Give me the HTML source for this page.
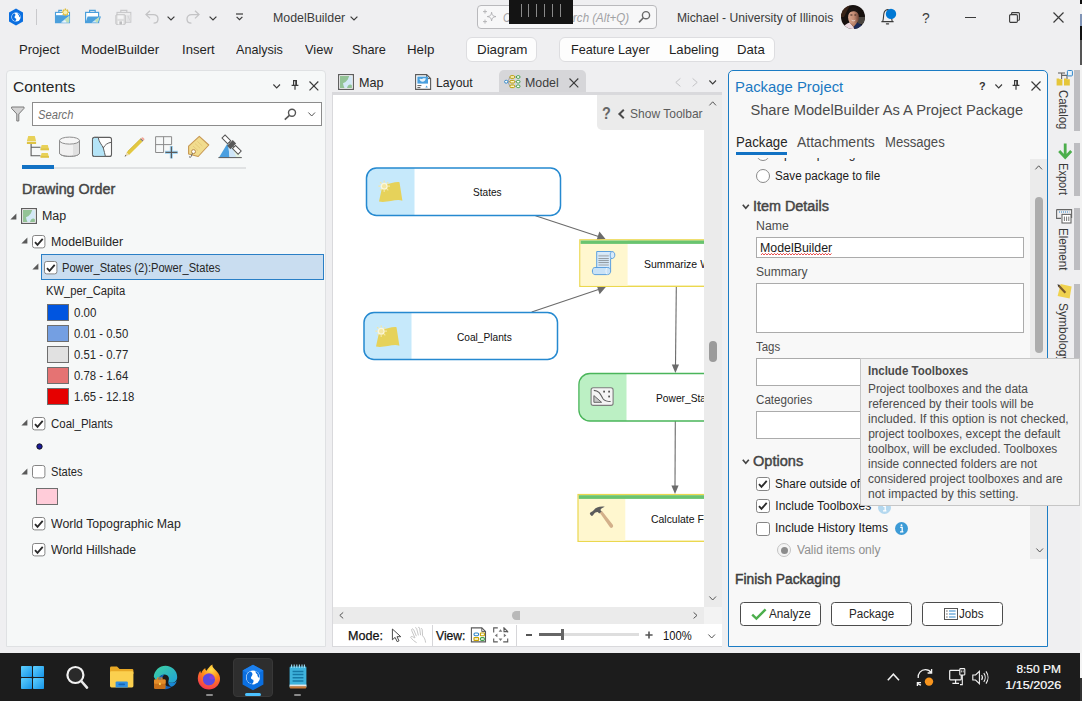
<!DOCTYPE html>
<html><head><meta charset="utf-8"><title>ArcGIS Pro - ModelBuilder</title>
<style>
html,body{margin:0;padding:0;}
body{width:1082px;height:701px;overflow:hidden;background:#efeff1;font-family:"Liberation Sans",sans-serif;}
#r{position:relative;width:1082px;height:701px;overflow:hidden;background:#efeff1;}
#r div,#r span.t,#r svg{position:absolute;box-sizing:border-box;}
#r span.t{white-space:nowrap;display:block;}
#r svg{overflow:visible;}
</style></head><body><div id="r">
<svg style="left:8px;top:8px;" width="16" height="18" viewBox="0 0 16 18"><path d="M8 0.6 L15 4.4 V13.6 L8 17.4 L1 13.6 V4.4 Z" fill="#0b6fe0"/>
<circle cx="8" cy="9" r="4.6" fill="#fff"/>
<path d="M6.2 5.2 C7.6 6 7.9 7 7 8 C6 9 6.6 10.4 8 10.6 C8.6 11.6 8 12.6 7.2 13.2 C4.8 12.6 3.6 10.6 3.9 8.4 C4.1 7 5 5.8 6.2 5.2 Z M9.6 5 C11.4 5.8 12.4 7.4 12.2 9.4 C11.4 9 10.8 8.2 10.9 7.2 C10.2 6.6 9.6 5.9 9.6 5 Z" fill="#0b6fe0"/></svg>
<div style="left:35.5px;top:9px;width:1.5px;height:16px;background:#c9c9cc;"></div>
<svg style="left:50px;top:4px;" width="90" height="26" viewBox="50 4 90 26">
<path d="M58.8 12 V10.4 H62" fill="none" stroke="#4a9fdc" stroke-width="1.1"/>
<rect x="55.5" y="12.4" width="14" height="10.2" fill="#fff" stroke="#4a9fdc" stroke-width="1.1"/>
<rect x="55" y="15.2" width="15" height="7.9" fill="#4a9fdc"/>
<path d="M60.6 22.4 L69.2 16 V22.4 Z" fill="#cfe8f6"/><path d="M64.6 19.4 L69.2 16 V22.4 H67 Z" fill="#bfe0b6"/><path d="M62 22.4 L65 20.2 L66.6 22.4 Z" fill="#eaf5fb"/>
<g stroke="#d9b93a" stroke-width="1.3"><path d="M65.4 8.6 V16 M61.7 12.3 H69.1 M62.8 9.7 L68 14.9 M68 9.7 L62.8 14.9"/></g>
<circle cx="65.4" cy="12.3" r="2.7" fill="#e0c244"/><circle cx="65.4" cy="12.3" r="2" fill="#f6efb6"/>
<path d="M89.6 12 V10.4 H95.2 V12" fill="none" stroke="#4a9fdc" stroke-width="1.2"/>
<rect x="85.6" y="12.4" width="13" height="10.2" fill="#fff" stroke="#4a9fdc" stroke-width="1.2"/>
<path d="M85.4 23.1 L87.6 16.4 H101 L98.6 23.1 Z" fill="#4a9fdc"/>
<path d="M91.6 22.4 L99.4 17 L97.8 22.4 Z" fill="#cfe8f6"/><path d="M95 20 L99.4 17 L97.8 22.4 H96.4 Z" fill="#bfe0b6"/>
<path d="M120.8 12 V10.4 H126.8 V12" fill="none" stroke="#c8c8ca" stroke-width="1.2"/>
<rect x="117" y="12.4" width="13.8" height="9.8" fill="#ededee" stroke="#c8c8ca" stroke-width="1.1"/>
<path d="M126.4 15 H130.4 V21.6 H126.4 Z" fill="#e2e2e4"/><path d="M128 16 C128.6 18 129.6 19.6 130.2 20.6" fill="none" stroke="#d0d0d2" stroke-width="0.9"/>
<rect x="115.9" y="14.8" width="9.4" height="9.6" rx="0.8" fill="#dededf" stroke="#c2c2c4" stroke-width="1"/>
<rect x="117.6" y="15.4" width="6" height="3.4" fill="#f4f4f5"/>
<rect x="117.8" y="21" width="5.6" height="3.4" fill="#f4f4f5"/><rect x="119.4" y="21.4" width="2.6" height="3" fill="#bdbdbf"/>
</svg>
<svg style="left:145px;top:10px;" width="14" height="14" viewBox="0 0 14 14"><path d="M5 0.8 L1 4.6 L5 8.4 M1 4.6 H8.2 C11.4 4.6 13 6.6 13 9 C13 11.4 11.2 13.2 8.6 13.2" fill="none" stroke="#c3c3c5" stroke-width="1.3"/></svg>
<svg style="left:167px;top:16px;" width="8" height="5" viewBox="0 0 8 5"><path d="M0.6 0.6 L4 4 L7.4 0.6" fill="none" stroke="#3b3b3b" stroke-width="1.2"/></svg>
<svg style="left:186px;top:10px;" width="14" height="14" viewBox="0 0 14 14"><path d="M9 0.8 L13 4.6 L9 8.4 M13 4.6 H5.8 C2.6 4.6 1 6.6 1 9 C1 11.4 2.8 13.2 5.4 13.2" fill="none" stroke="#c3c3c5" stroke-width="1.3"/></svg>
<svg style="left:209px;top:16px;" width="8" height="5" viewBox="0 0 8 5"><path d="M0.6 0.6 L4 4 L7.4 0.6" fill="none" stroke="#3b3b3b" stroke-width="1.2"/></svg>
<svg style="left:235px;top:13px;" width="9" height="8" viewBox="0 0 9 8"><path d="M1 1 H8" stroke="#3b3b3b" stroke-width="1.2"/><path d="M1.6 3.8 L4.5 6.7 L7.4 3.8" fill="none" stroke="#3b3b3b" stroke-width="1.2"/></svg>
<span class="t" style="top:8.50px;font-size:13px;line-height:18px;color:#3b3b3b;left:273.30px;transform-origin:0 0;transform:scaleX(0.9516);">ModelBuilder</span>
<svg style="left:350px;top:16px;" width="8" height="5" viewBox="0 0 8 5"><path d="M0.6 0.6 L4 4 L7.4 0.6" fill="none" stroke="#3b3b3b" stroke-width="1.2"/></svg>
<div style="left:477px;top:5px;width:180px;height:24px;background:#f7f7f8;border:1px solid #b9b9bc;border-radius:4px;"></div>
<svg style="left:482px;top:9px;" width="16" height="16" viewBox="0 0 16 16"><path d="M9.6 3.2 C10 6.4 10.8 7.2 14 7.6 C10.8 8 10 8.8 9.6 12 C9.2 8.8 8.4 8 5.2 7.6 C8.4 7.2 9.2 6.4 9.6 3.2 Z" fill="none" stroke="#b0b0b3" stroke-width="0.9"/>
<path d="M3 0.6 V4.6 M1 2.6 H5 M3 10.6 V14.6 M1 12.6 H5" stroke="#b0b0b3" stroke-width="0.9"/></svg>
<span class="t" style="top:9.00px;font-size:12.5px;line-height:18px;color:#a2a2a5;font-style:italic;left:502.90px;transform-origin:0 0;transform:scaleX(0.8492);">Command Sea</span>
<span class="t" style="top:9.00px;font-size:12.5px;line-height:18px;color:#a2a2a5;font-style:italic;left:572.70px;transform-origin:0 0;transform:scaleX(0.9248);">rch (Alt+Q)</span>
<svg style="left:638px;top:10px;" width="13" height="14" viewBox="0 0 13 14"><circle cx="8" cy="5.2" r="3.6" fill="none" stroke="#6a6a6a" stroke-width="1.4"/><path d="M5.4 7.8 L1 12.4" stroke="#6a6a6a" stroke-width="1.6"/></svg>
<div style="left:509px;top:0px;width:64px;height:23.5px;background:#141414;"></div>
<div style="left:520.5px;top:4px;width:1.2px;height:12.5px;background:#8a8a8a;"></div>
<div style="left:528.3px;top:4px;width:1.2px;height:12.5px;background:#8a8a8a;"></div>
<div style="left:536.2px;top:4px;width:1.2px;height:12.5px;background:#8a8a8a;"></div>
<div style="left:544.0px;top:4px;width:1.2px;height:12.5px;background:#8a8a8a;"></div>
<div style="left:552.0px;top:4px;width:1.2px;height:12.5px;background:#8a8a8a;"></div>
<div style="left:560.0px;top:4px;width:1.2px;height:12.5px;background:#8a8a8a;"></div>
<span class="t" style="top:8.50px;font-size:13px;line-height:18px;color:#3b3b3b;left:677.00px;transform-origin:0 0;transform:scaleX(0.9320);">Michael - University of Illinois</span>
<svg style="left:841px;top:5px;" width="24" height="24" viewBox="0 0 24 24"><defs><clipPath id="av"><circle cx="12" cy="11.9" r="12"/></clipPath>
<linearGradient id="sk" x1="0" y1="0" x2="1" y2="0"><stop offset="0" stop-color="#d9a78f"/><stop offset="0.55" stop-color="#c48c74"/><stop offset="1" stop-color="#6e4436"/></linearGradient></defs>
<g clip-path="url(#av)"><rect width="24" height="24" fill="#17110f"/>
<path d="M0 0 H9 L3 12 H0 Z" fill="#3a2418"/>
<path d="M16 12 H24 V19 H17 Z" fill="#4a4540"/>
<ellipse cx="12.5" cy="12.4" rx="5.4" ry="7.4" fill="url(#sk)"/>
<path d="M7.2 9.4 C7.2 4.8 9.6 2.6 12.6 2.6 C15.8 2.6 17.6 5 17.5 9 C16.4 6.8 14.4 6 12.6 6.2 C10.4 6.2 8.4 7.2 7.2 9.4 Z" fill="#1c1614"/>
<path d="M9.4 10 H11.4 M13.4 10 H15.2" stroke="#2a1c18" stroke-width="0.9"/>
<path d="M10.6 15.2 C11.8 16 13.2 16 14.2 15.2" fill="none" stroke="#f2e4de" stroke-width="0.9"/>
<path d="M1 24 C2.4 20.4 5.4 18.6 8.6 17.4 L12.6 22 L13.4 24 Z" fill="#ecd9e0"/>
<path d="M13.4 24 L12.6 22 L16 17.6 C19 18.6 21.6 20.4 23 24 Z" fill="#1d2b58"/>
<path d="M8.6 17.4 L12.6 22 L16 17.6 C14 19 10.8 19 8.6 17.4 Z" fill="#b88068"/></g></svg>
<svg style="left:880px;top:8px;" width="15" height="17" viewBox="0 0 15 17"><path d="M1.4 13.6 H13.6 M2.8 13.2 C3.6 11 3.4 8.4 3.8 6 C4.2 3.6 5.6 1.8 7.6 1.6 C9.4 1.8 10.8 3.4 11.2 5.6 C11.6 8.2 11.4 11 12.2 13.2" fill="none" stroke="#3b3b3b" stroke-width="1.1"/>
<path d="M6.4 15.8 H8.6" stroke="#3b3b3b" stroke-width="1.2" stroke-linecap="round"/>
<circle cx="11" cy="5.9" r="5.2" fill="#0078d4"/></svg>
<span class="t" style="top:8.00px;font-size:14px;line-height:20px;color:#3b3b3b;left:922.30px;transform-origin:0 0;transform:scaleX(0.9890);">?</span>
<div style="left:965px;top:17px;width:10.5px;height:1.2px;background:#3b3b3b;"></div>
<svg style="left:1009px;top:12px;" width="11" height="11" viewBox="0 0 11 11"><path d="M2.6 2.6 V1.4 Q2.6 0.6 3.4 0.6 H9.4 Q10.4 0.6 10.4 1.6 V7.4 Q10.4 8.2 9.6 8.2 H8.4" fill="none" stroke="#3b3b3b" stroke-width="1.1"/><rect x="0.6" y="2.6" width="7.8" height="7.8" rx="1.2" fill="none" stroke="#3b3b3b" stroke-width="1.1"/></svg>
<svg style="left:1052.5px;top:12px;" width="11" height="11" viewBox="0 0 11 11"><path d="M0.5 0.5 L10.5 10.5 M10.5 0.5 L0.5 10.5" stroke="#3b3b3b" stroke-width="1.2"/></svg>
<span class="t" style="top:40.00px;font-size:13.5px;line-height:19px;color:#1f1f1f;left:18.80px;transform-origin:0 0;transform:scaleX(0.9687);">Project</span>
<span class="t" style="top:40.00px;font-size:13.5px;line-height:19px;color:#1f1f1f;left:80.80px;transform-origin:0 0;transform:scaleX(0.9925);">ModelBuilder</span>
<span class="t" style="top:40.00px;font-size:13.5px;line-height:19px;color:#1f1f1f;left:181.80px;transform-origin:0 0;transform:scaleX(0.9686);">Insert</span>
<span class="t" style="top:40.00px;font-size:13.5px;line-height:19px;color:#1f1f1f;left:236.30px;transform-origin:0 0;transform:scaleX(0.9330);">Analysis</span>
<span class="t" style="top:40.00px;font-size:13.5px;line-height:19px;color:#1f1f1f;left:304.80px;transform-origin:0 0;transform:scaleX(0.9546);">View</span>
<span class="t" style="top:40.00px;font-size:13.5px;line-height:19px;color:#1f1f1f;left:352.30px;transform-origin:0 0;transform:scaleX(0.9411);">Share</span>
<span class="t" style="top:40.00px;font-size:13.5px;line-height:19px;color:#1f1f1f;left:406.80px;transform-origin:0 0;transform:scaleX(0.9869);">Help</span>
<div style="left:466px;top:36.5px;width:70.5px;height:25.5px;background:#fdfdfd;border:1px solid #dddde0;border-radius:6px;"></div>
<span class="t" style="top:40.00px;font-size:13.5px;line-height:19px;color:#1f1f1f;left:477.00px;transform-origin:0 0;transform:scaleX(0.9900);">Diagram</span>
<div style="left:559px;top:36.5px;width:215.5px;height:25.5px;background:#fdfdfd;border:1px solid #dddde0;border-radius:6px;"></div>
<span class="t" style="top:40.00px;font-size:13.5px;line-height:19px;color:#1f1f1f;left:570.90px;transform-origin:0 0;transform:scaleX(0.9353);">Feature Layer</span>
<span class="t" style="top:40.00px;font-size:13.5px;line-height:19px;color:#1f1f1f;left:669.30px;transform-origin:0 0;transform:scaleX(0.9776);">Labeling</span>
<span class="t" style="top:40.00px;font-size:13.5px;line-height:19px;color:#1f1f1f;left:737.30px;transform-origin:0 0;transform:scaleX(0.9749);">Data</span>
<div style="left:6px;top:70px;width:320px;height:577px;background:#f6f8f8;border:1px solid #dfe1e3;border-radius:4px 4px 0 0;"></div>
<span class="t" style="top:76.00px;font-size:15px;line-height:21px;color:#262626;left:12.60px;transform-origin:0 0;transform:scaleX(1.0361);">Contents</span>
<svg style="left:273px;top:83.5px;" width="8" height="5" viewBox="0 0 8 5"><path d="M0.4 0.5 L3.7 4 L7 0.5" fill="none" stroke="#3b3b3b" stroke-width="1.1"/></svg>
<svg style="left:291px;top:80px;" width="8" height="10" viewBox="0 0 8 10"><path d="M2 0.6 H6 M2.6 0.6 V5.2 M5.4 0.6 V5.2 M0.6 5.4 H7.4 M4 5.4 V9.8" fill="none" stroke="#3b3b3b" stroke-width="1.2"/><rect x="4.3" y="0.6" width="1.4" height="4.8" fill="#3b3b3b"/></svg>
<svg style="left:309px;top:81px;" width="10" height="10" viewBox="0 0 10 10"><path d="M0.5 0.5 L9.3 9.3 M9.3 0.5 L0.5 9.3" stroke="#3b3b3b" stroke-width="1.2"/></svg>
<svg style="left:11px;top:106px;" width="14" height="16" viewBox="0 0 14 16"><path d="M0.6 1 H13 V2.4 L7.8 8 V15 H5.8 V8 L0.6 2.4 Z" fill="#d4d4d4" stroke="#7a7a7a" stroke-width="1"/></svg>
<div style="left:32px;top:102px;width:290px;height:24px;background:#fff;border:1px solid #8c8c8c;"></div>
<span class="t" style="top:106.00px;font-size:12.5px;line-height:18px;color:#6e6e6e;font-style:italic;left:37.60px;transform-origin:0 0;transform:scaleX(0.8939);">Search</span>
<svg style="left:284px;top:108px;" width="13" height="13" viewBox="0 0 13 13"><circle cx="8" cy="4.8" r="3.5" fill="none" stroke="#555" stroke-width="1.4"/><path d="M5.4 7.4 L0.8 11.6" stroke="#555" stroke-width="1.6"/></svg>
<svg style="left:308px;top:112px;" width="8" height="5" viewBox="0 0 8 5"><path d="M0.4 0.5 L3.7 4 L7 0.5" fill="none" stroke="#555" stroke-width="1"/></svg>
<svg style="left:20px;top:130px;" width="230" height="42" viewBox="20 130 230 42">
<path d="M31.1 144 V155.7 H40.5 M31.1 147.3 H40.5" fill="none" stroke="#5a5a5a" stroke-width="1.1"/>
<path d="M28.2 136.1 H34.8 L36.1 141 H26.9 Z" fill="#e8d158"/><rect x="26.9" y="141.7" width="9.2" height="2.3" fill="#dec344"/>
<path d="M41.6 145 H47.8 L49 149.6 H40.5 Z" fill="#e8d158"/><rect x="40.5" y="148.4" width="8.5" height="1.9" fill="#dec344"/>
<path d="M41.6 153 H47.8 L49 157 H40.5 Z" fill="#e8d158"/><rect x="40.5" y="156" width="8.5" height="1.8" fill="#dec344"/>
<!-- cylinder -->
<path d="M59.5 140.6 V153 C59.5 155 64 156.4 69.5 156.4 C75 156.4 79.5 155 79.5 153 V140.6" fill="#f1f1f1" stroke="#8e8e8e" stroke-width="1"/>
<path d="M73 143.6 C76.6 143.2 79 142.2 79.4 141 V153 C79 154.6 76.6 155.6 73 156.2 Z" fill="#e0e0e0"/>
<ellipse cx="69.5" cy="140.6" rx="10" ry="3.5" fill="#f6f6f6" stroke="#8e8e8e" stroke-width="1"/>
<path d="M59.5 140.6 V153 C59.5 155 64 156.4 69.5 156.4 C75 156.4 79.5 155 79.5 153 V140.6" fill="none" stroke="#8e8e8e" stroke-width="1"/>
<!-- polygon -->
<rect x="92.5" y="137.4" width="19" height="19" rx="2" fill="#fdfdfd" stroke="#5e5e5e" stroke-width="1.1"/>
<path d="M92.5 139.4 Q92.5 137.4 94.5 137.4 H98.2 C98.8 142 101.8 144.6 103.3 148 C104.4 151 104.6 154 105.4 156.4 H94.5 Q92.5 156.4 92.5 154.4 Z" fill="#b4e4f7" stroke="#5e5e5e" stroke-width="1"/>
<path d="M103.3 148 C104.6 145 107.6 142.8 111.5 142.2" fill="none" stroke="#5e5e5e" stroke-width="1"/>
<!-- pencil -->
<path d="M126.6 152.6 L140.2 139.2 L142.6 141.6 L129 155.1 Z" fill="#e3c840"/>
<path d="M127.6 151.6 L141 138.4" stroke="#cdb02e" stroke-width="0.8"/>
<path d="M140.2 139.2 L141 138.4 L143.4 140.8 L142.6 141.6 Z" fill="#6a6a6a"/>
<path d="M141 138.4 L141.8 137.6 Q142.6 137 143.4 137.7 L144.1 138.4 Q144.8 139.2 144.2 140 L143.4 140.8 Z" fill="#f0a79a"/>
<path d="M126.6 152.6 L124.6 156.6 L129 155.1 Z" fill="#ead8ac"/><path d="M124.6 156.6 L125.4 155 L126.4 156 Z" fill="#444"/>
<!-- grid plus -->
<path d="M155.6 136.7 H171.6 V144.6 M155.6 136.7 V152.5 H163.6 M163.6 136.7 V152.5 M155.6 144.6 H171.6" fill="none" stroke="#8a8a8a" stroke-width="1"/>
<path d="M171.4 146 V158.6 M165 152.4 H177.8" stroke="#a6d8f6" stroke-width="3.2"/>
<path d="M171.4 146.4 V158.2 M165.4 152.4 H177.4" stroke="#5a5a5a" stroke-width="1.2"/>
<!-- tag -->
<path d="M199.3 136.4 L208.8 145 L198.2 156.5 L188.6 154 V146.2 Z" fill="#f1dc8e" stroke="#c79852" stroke-width="1.1" stroke-linejoin="round"/>
<path d="M197.4 141.4 L202.4 146 M195 143.6 L200 148.2 M193 146 L198 150.6" stroke="#e4c878" stroke-width="0.9"/>
<circle cx="193.5" cy="151.6" r="2" fill="#fbfbfb" stroke="#b98a48" stroke-width="1"/>
<path d="M192.4 153.2 L191.2 156.6 Q190.6 157.8 189 156.8" fill="none" stroke="#6a6a6a" stroke-width="1"/>
<!-- satellite -->
<path d="M227.4 143.6 L219 157.4 H241.2 L233 146 Z" fill="#e4f2e2"/>
<path d="M227.4 143.6 L219 157.4 H229.6 L228.6 148 Z" fill="#4a9fe0"/>
<path d="M228.6 148 L229.6 157.4 H236.4 L232 147 Z" fill="#cfe6f8"/>
<path d="M218.4 157.6 H241.8" stroke="#5a5a5a" stroke-width="1"/>
<g transform="rotate(45 231.6 144.6)"><rect x="229.2" y="140.6" width="4.8" height="8" fill="#5a5a5a"/>
<rect x="220.2" y="142.4" width="8" height="4.4" fill="#fff" stroke="#555" stroke-width="1"/><rect x="235" y="142.4" width="8" height="4.4" fill="#fff" stroke="#555" stroke-width="1"/>
<path d="M228.2 144.6 H229.2 M234 144.6 H235" stroke="#555" stroke-width="1"/></g>
</svg>
<div style="left:22px;top:165px;width:32px;height:4px;background:#1272c4;"></div>
<div style="left:54px;top:166.7px;width:192px;height:2.3px;background:#e0e2e3;"></div>
<span class="t" style="top:179.00px;font-size:14.5px;line-height:20px;color:#454545;-webkit-text-stroke:0.45px #454545;left:22.10px;transform-origin:0 0;transform:scaleX(0.9886);">Drawing Order</span>
<svg style="left:9.5px;top:212.5px;" width="7" height="7" viewBox="0 0 7 7"><path d="M6.4 0.4 V6.4 H0.4 Z" fill="#5a5a5a"/></svg>
<svg style="left:21px;top:208px;" width="16" height="16" viewBox="0 0 16 16"><rect x="0.6" y="0.6" width="14.8" height="14.8" fill="#fff" stroke="#5f5f5f" stroke-width="1.2"/>
<rect x="2" y="2.1" width="11.9" height="11.8" fill="#d3e8f6"/>
<path d="M2 2.1 H11.2 L9.8 5.5 L7.5 8 L5 9.3 L5.6 12 L6.5 13.9 H2 Z" fill="#93c396"/>
<path d="M9 13.9 C9.8 10.6 12.5 9.8 13.9 11.2 V13.9 Z" fill="#93c396"/></svg>
<span class="t" style="top:207.50px;font-size:12px;line-height:17px;color:#262626;left:42.00px;transform-origin:0 0;transform:scaleX(1.0368);">Map</span>
<svg style="left:21px;top:237px;" width="7" height="7" viewBox="0 0 7 7"><path d="M6.4 0.4 V6.4 H0.4 Z" fill="#5a5a5a"/></svg>
<svg style="left:32.2px;top:234.5px;" width="14" height="14" viewBox="0 0 14 14"><rect x="0.5" y="0.5" width="12.4" height="12.4" rx="2.2" fill="#fff" stroke="#858585" stroke-width="1"/><path d="M3 7.1 L5.5 9.9 L10.7 3.8" fill="none" stroke="#2b2b2b" stroke-width="1.8"/></svg>
<span class="t" style="top:233.50px;font-size:12px;line-height:17px;color:#262626;left:50.50px;transform-origin:0 0;transform:scaleX(1.0281);">ModelBuilder</span>
<div style="left:41px;top:254px;width:283px;height:26px;background:#c9ddf0;border:1px solid #2a7fc6;"></div>
<svg style="left:32px;top:263px;" width="7" height="7" viewBox="0 0 7 7"><path d="M6.4 0.4 V6.4 H0.4 Z" fill="#5a5a5a"/></svg>
<svg style="left:43.800000000000004px;top:260.7px;" width="14" height="14" viewBox="0 0 14 14"><rect x="0.5" y="0.5" width="12.4" height="12.4" rx="2.2" fill="#fff" stroke="#858585" stroke-width="1"/><path d="M3 7.1 L5.5 9.9 L10.7 3.8" fill="none" stroke="#2b2b2b" stroke-width="1.8"/></svg>
<span class="t" style="top:259.50px;font-size:12px;line-height:17px;color:#262626;left:61.80px;transform-origin:0 0;transform:scaleX(0.9266);">Power_States (2):Power_States</span>
<span class="t" style="top:282.50px;font-size:12px;line-height:17px;color:#262626;left:45.70px;transform-origin:0 0;transform:scaleX(0.9350);">KW_per_Capita</span>
<div style="left:47px;top:304px;width:22px;height:17px;background:#0055e0;border:1px solid #6e6e6e;"></div>
<span class="t" style="top:304.50px;font-size:12px;line-height:17px;color:#262626;left:74.20px;transform-origin:0 0;transform:scaleX(0.9592);">0.00</span>
<div style="left:47px;top:325px;width:22px;height:17px;background:#749fe2;border:1px solid #6e6e6e;"></div>
<span class="t" style="top:325.50px;font-size:12px;line-height:17px;color:#262626;left:74.20px;transform-origin:0 0;transform:scaleX(0.9448);">0.01 - 0.50</span>
<div style="left:47px;top:346px;width:22px;height:17px;background:#e1e1e1;border:1px solid #6e6e6e;"></div>
<span class="t" style="top:346.50px;font-size:12px;line-height:17px;color:#262626;left:74.20px;transform-origin:0 0;transform:scaleX(0.9448);">0.51 - 0.77</span>
<div style="left:47px;top:367px;width:22px;height:17px;background:#e57373;border:1px solid #6e6e6e;"></div>
<span class="t" style="top:367.50px;font-size:12px;line-height:17px;color:#262626;left:74.20px;transform-origin:0 0;transform:scaleX(0.9448);">0.78 - 1.64</span>
<div style="left:47px;top:388px;width:22px;height:17px;background:#e60000;border:1px solid #6e6e6e;"></div>
<span class="t" style="top:388.50px;font-size:12px;line-height:17px;color:#262626;left:74.20px;transform-origin:0 0;transform:scaleX(0.9400);">1.65 - 12.18</span>
<svg style="left:21px;top:419px;" width="7" height="7" viewBox="0 0 7 7"><path d="M6.4 0.4 V6.4 H0.4 Z" fill="#5a5a5a"/></svg>
<svg style="left:32.2px;top:417.0px;" width="14" height="14" viewBox="0 0 14 14"><rect x="0.5" y="0.5" width="12.4" height="12.4" rx="2.2" fill="#fff" stroke="#858585" stroke-width="1"/><path d="M3 7.1 L5.5 9.9 L10.7 3.8" fill="none" stroke="#2b2b2b" stroke-width="1.8"/></svg>
<span class="t" style="top:415.50px;font-size:12px;line-height:17px;color:#262626;left:50.70px;transform-origin:0 0;transform:scaleX(0.9536);">Coal_Plants</span>
<svg style="left:36px;top:443.3px;" width="7" height="7" viewBox="0 0 7 7"><circle cx="3.5" cy="3.5" r="2.7" fill="#1b1b9a" stroke="#111" stroke-width="0.9"/></svg>
<svg style="left:21px;top:467.5px;" width="7" height="7" viewBox="0 0 7 7"><path d="M6.4 0.4 V6.4 H0.4 Z" fill="#5a5a5a"/></svg>
<svg style="left:32.2px;top:465.0px;" width="14" height="14" viewBox="0 0 14 14"><rect x="0.5" y="0.5" width="12.4" height="12.4" rx="2.2" fill="#fff" stroke="#858585" stroke-width="1"/></svg>
<span class="t" style="top:463.50px;font-size:12px;line-height:17px;color:#262626;left:50.70px;transform-origin:0 0;transform:scaleX(0.9260);">States</span>
<div style="left:36px;top:488px;width:22px;height:17px;background:#ffccd9;border:1px solid #6e6e6e;"></div>
<svg style="left:32.2px;top:517.2px;" width="14" height="14" viewBox="0 0 14 14"><rect x="0.5" y="0.5" width="12.4" height="12.4" rx="2.2" fill="#fff" stroke="#858585" stroke-width="1"/><path d="M3 7.1 L5.5 9.9 L10.7 3.8" fill="none" stroke="#2b2b2b" stroke-width="1.8"/></svg>
<span class="t" style="top:515.50px;font-size:12px;line-height:17px;color:#262626;left:50.70px;transform-origin:0 0;transform:scaleX(1.0278);">World Topographic Map</span>
<svg style="left:32.2px;top:543.0px;" width="14" height="14" viewBox="0 0 14 14"><rect x="0.5" y="0.5" width="12.4" height="12.4" rx="2.2" fill="#fff" stroke="#858585" stroke-width="1"/><path d="M3 7.1 L5.5 9.9 L10.7 3.8" fill="none" stroke="#2b2b2b" stroke-width="1.8"/></svg>
<span class="t" style="top:541.50px;font-size:12px;line-height:17px;color:#262626;left:50.70px;transform-origin:0 0;transform:scaleX(1.0142);">World Hillshade</span>
<svg style="left:338px;top:74px;" width="16" height="16" viewBox="0 0 16 16"><rect x="0.6" y="0.6" width="14.8" height="14.8" fill="#fff" stroke="#5f5f5f" stroke-width="1.2"/>
<rect x="2" y="2.1" width="11.9" height="11.8" fill="#d3e8f6"/>
<path d="M2 2.1 H11.2 L9.8 5.5 L7.5 8 L5 9.3 L5.6 12 L6.5 13.9 H2 Z" fill="#93c396"/>
<path d="M9 13.9 C9.8 10.6 12.5 9.8 13.9 11.2 V13.9 Z" fill="#93c396"/></svg>
<span class="t" style="top:73.50px;font-size:13px;line-height:18px;color:#262626;left:358.50px;transform-origin:0 0;transform:scaleX(0.9689);">Map</span>
<svg style="left:415px;top:74px;" width="17" height="16" viewBox="0 0 17 16"><path d="M0.6 0.6 H11.6 L15.6 4.6 V15.4 H0.6 Z" fill="#fff" stroke="#5a5a5a" stroke-width="1.1"/>
<path d="M11.6 0.6 V4.6 H15.6" fill="none" stroke="#5a5a5a" stroke-width="1"/>
<rect x="2.4" y="2.6" width="10.6" height="7" fill="#4aa0df"/>
<path d="M4.4 5 C5.6 4 6.4 5.6 7.4 4.8 C8.6 4 9.6 4.6 10.8 4.2 C10.6 6.2 9.4 7.6 7.6 7.8 C6 7.8 4.8 6.6 4.4 5 Z" fill="#e6f3fb"/>
<path d="M2.4 11.6 H6.4 M2.4 13.6 H5.4" stroke="#5a5a5a" stroke-width="1"/><path d="M10.4 13.6 L11.6 11.6 L12.8 13.6 Z" fill="#4aa0df"/></svg>
<span class="t" style="top:73.50px;font-size:13px;line-height:18px;color:#262626;left:435.80px;transform-origin:0 0;transform:scaleX(0.9403);">Layout</span>
<div style="left:498.5px;top:70px;width:87px;height:25px;background:#d6d6d9;border-radius:5px 5px 0 0;"></div>
<svg style="left:500px;top:70px;" width="24" height="22" viewBox="500 70 24 22"><path d="M507.8 81.7 L510 77 M507.8 81.7 H510 M507.8 81.7 L510 86.3 M514.6 77 H516.4 M514.6 81.7 H516.4 M514.6 86.3 H516.4" fill="none" stroke="#9a9a9a" stroke-width="0.9"/>
<rect x="504.6" y="80.3" width="3.2" height="2.8" rx="1.3" fill="#fff" stroke="#2f86c9" stroke-width="1"/>
<rect x="510" y="75.7" width="4.6" height="2.6" rx="1.1" fill="#fff7c8" stroke="#b89b00" stroke-width="1"/>
<rect x="510" y="80.4" width="4.6" height="2.6" rx="1.1" fill="#fff7c8" stroke="#b89b00" stroke-width="1"/>
<rect x="510" y="85" width="4.6" height="2.6" rx="1.1" fill="#fff7c8" stroke="#b89b00" stroke-width="1"/>
<rect x="516.4" y="75.7" width="3.6" height="2.6" rx="1.3" fill="#fff" stroke="#3fa046" stroke-width="1"/>
<rect x="516.4" y="80.4" width="3.6" height="2.6" rx="1.3" fill="#fff" stroke="#3fa046" stroke-width="1"/>
<rect x="516.4" y="85" width="3.6" height="2.6" rx="1.3" fill="#fff" stroke="#3fa046" stroke-width="1"/></svg>
<span class="t" style="top:73.50px;font-size:13px;line-height:18px;color:#3c3c3c;left:525.30px;transform-origin:0 0;transform:scaleX(0.9519);">Model</span>
<svg style="left:569px;top:78px;" width="10" height="10" viewBox="0 0 10 10"><path d="M0.5 0.5 L9.3 9.3 M9.3 0.5 L0.5 9.3" stroke="#3b3b3b" stroke-width="1.1"/></svg>
<svg style="left:675px;top:78px;" width="6" height="9" viewBox="0 0 6 9"><path d="M5.4 0.4 L0.8 4.4 L5.4 8.4" fill="none" stroke="#c3c3c6" stroke-width="1"/></svg>
<svg style="left:692px;top:78px;" width="6" height="9" viewBox="0 0 6 9"><path d="M0.6 0.4 L5.2 4.4 L0.6 8.4" fill="none" stroke="#c3c3c6" stroke-width="1"/></svg>
<svg style="left:709px;top:79.5px;" width="8" height="5" viewBox="0 0 8 5"><path d="M0.4 0.5 L3.7 4 L7 0.5" fill="none" stroke="#3b3b3b" stroke-width="1.1"/></svg>
<div style="left:332px;top:92px;width:390px;height:555px;background:#d9d9dc;"></div>
<div style="left:333px;top:95px;width:388.5px;height:551px;background:#fff;"></div>
<div style="left:333px;top:95px;width:371px;height:512px;overflow:hidden;">
<svg style="left:0;top:0" width="371" height="512" viewBox="333 95 371 512">
<g fill="none" stroke="#6b6b6b" stroke-width="1.1">
<path d="M535.5 215.8 L600 237"/><path d="M531.7 312 L600 289"/>
<path d="M676.3 287 L675.5 366"/><path d="M675.3 421 L675 487"/></g>
<g fill="#6b6b6b"><path d="M605.5 239 L596.5 240.2 L599.4 231.6 Z"/><path d="M605.8 287 L599.6 294.2 L596.8 285.8 Z"/>
<path d="M675.4 373 L671.8 364.6 H679 Z"/><path d="M675 494 L671.4 485.6 H678.6 Z"/></g>
<!-- States -->
<path d="M414.5 168 H376.5 Q366.5 168 366.5 178 V205.5 Q366.5 215.5 376.5 215.5 H414.5 Z" fill="#c6e9fb"/>
<rect x="366.5" y="168" width="194" height="47.5" rx="10" fill="none" stroke="#2589d0" stroke-width="1.5"/>
<!-- Coal -->
<path d="M411.5 312.5 H374 Q364 312.5 364 322.5 V349.5 Q364 359.5 374 359.5 H411.5 Z" fill="#c6e9fb"/>
<rect x="364" y="312.5" width="193.5" height="47" rx="10" fill="none" stroke="#2589d0" stroke-width="1.5"/>
<!-- Summarize -->
<rect x="579.9" y="239.9" width="200" height="46.4" fill="#fff" stroke="#ebd84e" stroke-width="1.4"/>
<rect x="580.6" y="240.5" width="47" height="45.2" fill="#fff7cf"/>
<rect x="580.6" y="240.5" width="199" height="3.4" fill="#69c46f"/>
<!-- Power_States -->
<path d="M626.5 373.5 H590 Q578.9 373.5 578.9 384.5 V410 Q578.9 421 590 421 H626.5 Z" fill="#bcf0c4"/>
<rect x="578.9" y="373.5" width="200" height="47.5" rx="11" fill="none" stroke="#4ab55a" stroke-width="1.3"/>
<!-- Calculate -->
<rect x="578.1" y="494.6" width="200" height="46.7" fill="#fff" stroke="#ebd84e" stroke-width="1.4"/>
<rect x="578.8" y="495.2" width="46.5" height="45.5" fill="#fff7cf"/>
<rect x="578.8" y="495.2" width="199" height="3.7" fill="#69c46f"/>
</svg>
<svg style="left:44px;top:85px" width="26" height="24" viewBox="-2 -2 26 24">
<path d="M4.4 1.7 C9 3.4 15 -0.6 20.5 0.2 L23.4 18.7 C17 16.5 9 21 0 19.6 L2.5 8 Z" fill="#e6d25a"/>
<g stroke="#f3e7a6" stroke-width="1.2"><path d="M5.2 -1.6 V0.4 M5.2 8 V10 M-0.6 4.2 H1.4 M9 4.2 H11 M1.1 0.1 L2.5 1.5 M7.9 6.9 L9.3 8.3 M9.3 0.1 L7.9 1.5 M1.1 8.3 L2.5 6.9"/></g>
<circle cx="5.2" cy="4.2" r="3.5" fill="#fbf7dc"/><circle cx="5.2" cy="4.2" r="2.2" fill="#f3e7a4"/></svg>
<svg style="left:41.10000000000002px;top:229.8px" width="26" height="24" viewBox="-2 -2 26 24">
<path d="M4.4 1.7 C9 3.4 15 -0.6 20.5 0.2 L23.4 18.7 C17 16.5 9 21 0 19.6 L2.5 8 Z" fill="#e6d25a"/>
<g stroke="#f3e7a6" stroke-width="1.2"><path d="M5.2 -1.6 V0.4 M5.2 8 V10 M-0.6 4.2 H1.4 M9 4.2 H11 M1.1 0.1 L2.5 1.5 M7.9 6.9 L9.3 8.3 M9.3 0.1 L7.9 1.5 M1.1 8.3 L2.5 6.9"/></g>
<circle cx="5.2" cy="4.2" r="3.5" fill="#fbf7dc"/><circle cx="5.2" cy="4.2" r="2.2" fill="#f3e7a4"/></svg>
<svg style="left:0;top:0" width="371" height="512" viewBox="333 95 371 512">
<!-- scroll -->
<path d="M596.7 251.5 H611.6 C614 251.5 614.9 253.2 614.8 255.2 C614.7 257.4 613.4 258.8 611 258.6 H610.6 V270 H596.7 Z" fill="#d8eafa" stroke="#5da0de" stroke-width="1"/>
<path d="M611.4 251.8 C609.8 253 609.8 257 611.2 258.4" fill="none" stroke="#5da0de" stroke-width="0.9"/>
<path d="M594.8 267.5 H608 C610 267.6 610.7 269.4 610.7 271 C610.6 273.2 609.4 274.6 607.4 274.6 H594.8 C593 274.6 592.4 272.8 592.4 271 C592.4 269 593.2 267.5 594.8 267.5 Z" fill="#c9e2f7" stroke="#5da0de" stroke-width="1"/>
<path d="M607 267.8 C605.6 269.4 605.6 272.6 607 274.4" fill="none" stroke="#eef6fd" stroke-width="1"/>
<path d="M598.4 255.8 H608.8" stroke="#b3bcc4" stroke-width="1.8"/><path d="M598.4 258.6 H608.8 M598.4 260.6 H608.8 M598.4 262.6 H608.8" stroke="#8d959c" stroke-width="1"/><path d="M598.4 265 H608.8" stroke="#b3bcc4" stroke-width="1.6"/>
<!-- feature class -->
<rect x="591.1" y="387.8" width="22" height="17.6" rx="2.2" fill="#f4f4f4" stroke="#7c7c7c" stroke-width="1.1"/>
<path d="M593.8 390.4 C600.4 390.8 600.6 395.6 603.2 399 C605 401.2 607.6 401.5 610.6 401.5" fill="none" stroke="#5a5a5a" stroke-width="1.1"/>
<path d="M593.9 395.6 L601.6 402.3 H593.9 Z" fill="#c8c8c8" stroke="#666" stroke-width="1" stroke-linejoin="round"/>
<g fill="#555"><rect x="603.2" y="390.7" width="1.8" height="1.8"/><rect x="608.2" y="390.7" width="1.8" height="1.8"/><rect x="608.2" y="395.6" width="1.8" height="1.8"/></g>
<!-- hammer -->
<path d="M599.6 512.4 L601.8 510.8 L613 525 Q613.6 526.6 612.4 527.6 Q611 528.4 610 527.2 Z" fill="#d3b08a"/>
<path d="M589.8 513.2 C591 512 592.4 511.6 593.4 510.6 C595 508 599 506 604.8 506.8 C602.4 507.6 600.6 508.8 600.6 510.2 L601.6 511.4 L599.2 513.4 L598 512.2 C596.6 511.8 595 512.6 594 514 L592.2 516 C591 515.6 590 514.6 589.8 513.2 Z" fill="#5c5c5c"/>
</svg>
<span class="t" style="left:139.60px;top:89.00px;font-size:11px;line-height:16px;color:#111;transform-origin:0 0;transform:scaleX(0.9172);">States</span>
<span class="t" style="left:123.60px;top:234.00px;font-size:11px;line-height:16px;color:#111;transform-origin:0 0;transform:scaleX(0.9223);">Coal_Plants</span>
<span class="t" style="left:310.70px;top:161.00px;font-size:11px;line-height:16px;color:#111;transform-origin:0 0;transform:scaleX(0.9565);">Summarize Within</span>
<span class="t" style="left:322.70px;top:295.00px;font-size:11px;line-height:16px;color:#111;transform-origin:0 0;transform:scaleX(0.9300);">Power_States</span>
<span class="t" style="left:318.10px;top:416.00px;font-size:11px;line-height:16px;color:#111;transform-origin:0 0;transform:scaleX(0.9486);">Calculate Field</span>
<div style="left:264px;top:0;width:108px;height:35px;background:#ebebeb;border-radius:0 0 0 5px;"></div>
</div>
<span class="t" style="top:102.50px;font-size:16px;line-height:22px;color:#666;font-weight:bold;left:602.10px;transform-origin:0 0;transform:scaleX(0.9005);">?</span>
<svg style="left:618px;top:108.5px;" width="7" height="10" viewBox="0 0 7 10"><path d="M5.8 0.8 L1.4 5 L5.8 9.2" fill="none" stroke="#4a4a4a" stroke-width="2"/></svg>
<span class="t" style="top:104.50px;font-size:13px;line-height:18px;color:#5c5c5c;left:629.50px;transform-origin:0 0;transform:scaleX(0.9245);">Show Toolbar</span>
<div style="left:704px;top:95px;width:17.5px;height:512px;background:#ebebeb;"></div>
<svg style="left:709px;top:101px;" width="8" height="5" viewBox="0 0 8 5"><path d="M0.4 4.4 L3.7 0.8 L7 4.4" fill="none" stroke="#555" stroke-width="1"/></svg>
<div style="left:709px;top:341px;width:7.5px;height:21px;background:#9b9b9b;border-radius:4px;"></div>
<svg style="left:709px;top:596px;" width="8" height="5" viewBox="0 0 8 5"><path d="M0.4 0.5 L3.7 4 L7 0.5" fill="none" stroke="#555" stroke-width="1"/></svg>
<div style="left:333px;top:607px;width:371px;height:17px;background:#ebebeb;"></div>
<div style="left:704px;top:607px;width:17.5px;height:17px;background:#f3f3f3;"></div>
<svg style="left:339px;top:612.3px;" width="5" height="7" viewBox="0 0 5 7"><path d="M4.2 0.4 L0.8 3.4 L4.2 6.4" fill="none" stroke="#555" stroke-width="1"/></svg>
<svg style="left:693px;top:612.3px;" width="5" height="7" viewBox="0 0 5 7"><path d="M0.6 0.4 L4 3.4 L0.6 6.4" fill="none" stroke="#555" stroke-width="1"/></svg>
<div style="left:512px;top:611.3px;width:8.3px;height:8.4px;background:#b9b9b9;border-radius:4.2px 0 0 4.2px;"></div>
<div style="left:333px;top:624px;width:388.5px;height:22px;background:#fff;"></div>
<span class="t" style="top:626.50px;font-size:13px;line-height:18px;color:#111;left:347.60px;transform-origin:0 0;transform:scaleX(0.9660);-webkit-text-stroke:0.25px #111;">Mode:</span>
<svg style="left:385px;top:622px;" width="130" height="26" viewBox="385 622 130 26">
<path d="M392.4 629 V639.8 L395.1 637.4 L397.2 641.7 L399 640.8 L397 636.7 H400.8 Z" fill="#fff" stroke="#4a4a4a" stroke-width="1" stroke-linejoin="round"/>
<g fill="none" stroke="#c6c6c6" stroke-width="1"><path d="M416.4 636.2 L413.6 629.6 Q413 628.4 412 629 Q411.2 629.6 411.8 630.8 L415 638"/>
<path d="M418.4 635.4 L416.6 628.4 Q416.2 627.4 415.2 627.8"/><path d="M420.6 635.2 L419.6 628 Q419.2 627 418.2 627.4"/><path d="M422.6 635.8 L422.2 629.4 Q422 628.4 421 628.6"/>
<path d="M415 638 L412.4 636.6 Q411 636 410.6 637.2 C412 639.4 414.6 641.6 416.6 642.6 M422.6 635.8 C424.4 637.6 425.4 640 425.6 642.6"/></g>
<path d="M471.4 627.9 H481.8 L485.5 631.6 V641.9 H471.4 Z" fill="#fff" stroke="#5a5a5a" stroke-width="1.1"/><path d="M481.8 627.9 V631.6 H485.5" fill="none" stroke="#5a5a5a" stroke-width="1"/>
<rect x="474" y="633" width="4.6" height="2.8" rx="1.2" fill="#fff" stroke="#2f86c9" stroke-width="1.1"/><rect x="480.4" y="633" width="4" height="2.8" rx="0.5" fill="#fff" stroke="#c9a400" stroke-width="1.1"/>
<rect x="474" y="637.6" width="4.6" height="2.8" rx="0.5" fill="#fff" stroke="#c9a400" stroke-width="1.1"/><rect x="480.4" y="637.6" width="4" height="2.8" rx="1.2" fill="#fff" stroke="#3fa046" stroke-width="1.1"/>
<path d="M493.7 632.4 V627.9 H497.8 M503.2 627.9 H504 L507.7 631.6 V632.4 M504 627.9 V631.6 H507.7 M493.7 638.4 V641.9 H497.8 M503.2 641.9 H507.7 V638.4" fill="none" stroke="#5a5a5a" stroke-width="1.1"/>
<path d="M500.5 629.2 L498.6 631.8 H502.4 Z M500.5 641 L498.6 638.4 H502.4 Z M494.8 635.4 L497.4 633.5 V637.3 Z M506.4 635.4 L503.8 633.5 V637.3 Z" fill="#777"/>
</svg>
<div style="left:432.3px;top:625px;width:1px;height:21px;background:#d6d6d9;"></div>
<span class="t" style="top:626.50px;font-size:13px;line-height:18px;color:#111;left:435.60px;transform-origin:0 0;transform:scaleX(0.9349);-webkit-text-stroke:0.25px #111;">View:</span>
<div style="left:515.5px;top:625px;width:1px;height:21px;background:#d6d6d9;"></div>
<div style="left:526px;top:634px;width:6px;height:1.6px;background:#555;"></div>
<div style="left:539px;top:633.3px;width:100px;height:3px;background:#dedede;"></div>
<div style="left:539px;top:633.3px;width:23px;height:3px;background:#666;"></div>
<div style="left:561px;top:629px;width:3px;height:11px;background:#666;"></div>
<svg style="left:645px;top:631px;" width="8" height="8" viewBox="0 0 8 8"><path d="M4 0.4 V7.6 M0.4 4 H7.6" stroke="#555" stroke-width="1.6"/></svg>
<span class="t" style="top:626.50px;font-size:13px;line-height:18px;color:#111;left:662.80px;transform-origin:0 0;transform:scaleX(0.8632);">100%</span>
<svg style="left:708px;top:634px;" width="8" height="5" viewBox="0 0 8 5"><path d="M0.4 0.5 L3.7 4 L7 0.5" fill="none" stroke="#555" stroke-width="1"/></svg>
<div style="left:728px;top:70px;width:320px;height:576.5px;background:#f8f8f8;border:1.5px solid #1b7cc4;border-radius:5px 5px 0 0;"></div>
<span class="t" style="top:76.00px;font-size:15px;line-height:21px;color:#1a78c2;left:735.40px;transform-origin:0 0;transform:scaleX(0.9907);">Package Project</span>
<span class="t" style="top:78.00px;font-size:11.5px;line-height:16px;color:#333;font-weight:bold;left:979.10px;transform-origin:0 0;transform:scaleX(0.9396);">?</span>
<svg style="left:994.8px;top:83.5px;" width="8" height="5" viewBox="0 0 8 5"><path d="M0.4 0.5 L3.7 4 L7 0.5" fill="none" stroke="#3b3b3b" stroke-width="1.1"/></svg>
<svg style="left:1012.4px;top:80px;" width="8" height="10" viewBox="0 0 8 10"><path d="M2 0.6 H6 M2.6 0.6 V5.2 M5.4 0.6 V5.2 M0.6 5.4 H7.4 M4 5.4 V9.8" fill="none" stroke="#3b3b3b" stroke-width="1.2"/><rect x="4.3" y="0.6" width="1.4" height="4.8" fill="#3b3b3b"/></svg>
<svg style="left:1030.6px;top:81px;" width="10" height="10" viewBox="0 0 10 10"><path d="M0.5 0.5 L9.5 9.5 M9.5 0.5 L0.5 9.5" stroke="#3b3b3b" stroke-width="1.2"/></svg>
<span class="t" style="top:99.50px;font-size:14.7px;line-height:21px;color:#4c4c4c;left:750.40px;transform-origin:0 0;">Share ModelBuilder As A Project Package</span>
<span class="t" style="top:132.00px;font-size:14px;line-height:20px;color:#262626;left:735.90px;transform-origin:0 0;transform:scaleX(0.9453);">Package</span>
<span class="t" style="top:132.00px;font-size:14px;line-height:20px;color:#4c4c4c;left:797.00px;transform-origin:0 0;">Attachments</span>
<span class="t" style="top:132.00px;font-size:14px;line-height:20px;color:#4c4c4c;left:885.30px;transform-origin:0 0;transform:scaleX(0.9357);">Messages</span>
<div style="left:736px;top:152px;width:51px;height:3px;background:#1272c4;"></div>
<div style="left:730px;top:157.6px;width:300px;height:400px;overflow:hidden;">
<div style="left:26px;top:-10.8px;width:14.4px;height:14.4px;border:1px solid #8a8a8a;border-radius:7.2px;background:#fff;"></div>
<span class="t" style="left:45.3px;top:-12.1px;font-size:12px;line-height:17px;color:#1a1a1a;transform-origin:0 0;transform:scaleX(1.0);">Upload package to Online account</span>
</div>
<div style="left:756px;top:169px;width:14.4px;height:14.4px;border:1px solid #8a8a8a;border-radius:7.2px;background:#fff;"></div>
<span class="t" style="top:167.50px;font-size:12px;line-height:17px;color:#1a1a1a;left:775.30px;transform-origin:0 0;transform:scaleX(0.9735);">Save package to file</span>
<svg style="left:741.5px;top:204px;" width="8" height="6" viewBox="0 0 8 6"><path d="M0.8 0.8 L3.8 4.2 L6.8 0.8" fill="none" stroke="#444" stroke-width="1.7"/></svg>
<span class="t" style="top:196.00px;font-size:14px;line-height:20px;color:#454545;-webkit-text-stroke:0.45px #454545;left:752.60px;transform-origin:0 0;transform:scaleX(1.0270);">Item Details</span>
<span class="t" style="top:217.50px;font-size:12px;line-height:17px;color:#4c4c4c;left:755.70px;transform-origin:0 0;transform:scaleX(1.0247);">Name</span>
<div style="left:756px;top:237px;width:268px;height:21px;background:#fff;border:1px solid #ababab;"></div>
<span class="t" style="top:239.50px;font-size:12px;line-height:17px;color:#1a1a1a;left:760.40px;transform-origin:0 0;transform:scaleX(1.0309);">ModelBuilder</span>
<svg style="left:761px;top:253px;" width="72" height="3" viewBox="0 0 72 3"><path d="M0 2 L1.5 0.4 L3.0 2 L4.5 0.4 L6.0 2 L7.5 0.4 L9.0 2 L10.5 0.4 L12.0 2 L13.5 0.4 L15.0 2 L16.5 0.4 L18.0 2 L19.5 0.4 L21.0 2 L22.5 0.4 L24.0 2 L25.5 0.4 L27.0 2 L28.5 0.4 L30.0 2 L31.5 0.4 L33.0 2 L34.5 0.4 L36.0 2 L37.5 0.4 L39.0 2 L40.5 0.4 L42.0 2 L43.5 0.4 L45.0 2 L46.5 0.4 L48.0 2 L49.5 0.4 L51.0 2 L52.5 0.4 L54.0 2 L55.5 0.4 L57.0 2 L58.5 0.4 L60.0 2 L61.5 0.4 L63.0 2 L64.5 0.4 L66.0 2 L67.5 0.4 L69.0 2 L70.5 0.4" fill="none" stroke="#e02020" stroke-width="0.8"/></svg>
<span class="t" style="top:263.50px;font-size:12px;line-height:17px;color:#4c4c4c;left:755.70px;transform-origin:0 0;transform:scaleX(1.0051);">Summary</span>
<div style="left:756px;top:283px;width:268px;height:50px;background:#fff;border:1px solid #ababab;"></div>
<span class="t" style="top:338.50px;font-size:12px;line-height:17px;color:#4c4c4c;left:756.30px;transform-origin:0 0;transform:scaleX(0.9548);">Tags</span>
<div style="left:756px;top:358px;width:268px;height:28px;background:#fff;border:1px solid #ababab;"></div>
<span class="t" style="top:391.50px;font-size:12px;line-height:17px;color:#4c4c4c;left:756.30px;transform-origin:0 0;transform:scaleX(0.9685);">Categories</span>
<div style="left:756px;top:411px;width:268px;height:28px;background:#fff;border:1px solid #ababab;"></div>
<svg style="left:742px;top:459px;" width="8" height="6" viewBox="0 0 8 6"><path d="M0.8 0.8 L3.8 4.2 L6.8 0.8" fill="none" stroke="#444" stroke-width="1.7"/></svg>
<span class="t" style="top:451.00px;font-size:14px;line-height:20px;color:#454545;-webkit-text-stroke:0.45px #454545;left:753.30px;transform-origin:0 0;transform:scaleX(1.0405);">Options</span>
<svg style="left:756.2px;top:477.2px;" width="14" height="14" viewBox="0 0 14 14"><rect x="0.5" y="0.5" width="13" height="13" rx="2.2" fill="#fff" stroke="#858585" stroke-width="1"/><path d="M3 7.1 L5.5 9.9 L10.7 3.8" fill="none" stroke="#2b2b2b" stroke-width="1.8"/></svg>
<span class="t" style="top:475.50px;font-size:12px;line-height:17px;color:#1a1a1a;left:775.30px;transform-origin:0 0;transform:scaleX(0.9724);">Share outside of organization</span>
<svg style="left:756.2px;top:499.4px;" width="14" height="14" viewBox="0 0 14 14"><rect x="0.5" y="0.5" width="13" height="13" rx="2.2" fill="#fff" stroke="#858585" stroke-width="1"/><path d="M3 7.1 L5.5 9.9 L10.7 3.8" fill="none" stroke="#2b2b2b" stroke-width="1.8"/></svg>
<span class="t" style="top:497.50px;font-size:12px;line-height:17px;color:#1a1a1a;left:775.30px;transform-origin:0 0;">Include Toolboxes</span>
<svg style="left:878.2px;top:500.7px;" width="13" height="13" viewBox="0 0 13 13"><circle cx="6.5" cy="6.5" r="6.5" fill="#b4d8ef"/><path d="M5.2 5.4 H7.2 V9.6 M5 9.8 H8.4" fill="none" stroke="#fff" stroke-width="1.3"/><circle cx="6.5" cy="3.3" r="0.95" fill="#fff"/></svg>
<svg style="left:756.2px;top:521.5px;" width="14" height="14" viewBox="0 0 14 14"><rect x="0.5" y="0.5" width="13" height="13" rx="2.2" fill="#fff" stroke="#858585" stroke-width="1"/></svg>
<span class="t" style="top:519.50px;font-size:12px;line-height:17px;color:#1a1a1a;left:775.30px;transform-origin:0 0;transform:scaleX(1.0086);">Include History Items</span>
<svg style="left:894.8px;top:521.9px;" width="13" height="13" viewBox="0 0 13 13"><circle cx="6.5" cy="6.5" r="6.5" fill="#3d9bd6"/><path d="M5.2 5.4 H7.2 V9.6 M5 9.8 H8.4" fill="none" stroke="#fff" stroke-width="1.3"/><circle cx="6.5" cy="3.3" r="0.95" fill="#fff"/></svg>
<div style="left:777.3px;top:543.3px;width:13.6px;height:13.6px;border:1px solid #c4c4c4;border-radius:7px;background:#f4f4f4;"></div>
<div style="left:780.6px;top:546.6px;width:7px;height:7px;background:#8c8c8c;border-radius:3.5px;"></div>
<span class="t" style="top:541.50px;font-size:12px;line-height:17px;color:#8f8f8f;left:796.70px;transform-origin:0 0;transform:scaleX(1.0043);">Valid items only</span>
<div style="left:1030px;top:159px;width:16.5px;height:399.5px;background:#ebebeb;"></div>
<svg style="left:1035px;top:165px;" width="8" height="5" viewBox="0 0 8 5"><path d="M0.4 4.4 L3.7 0.8 L7 4.4" fill="none" stroke="#555" stroke-width="1"/></svg>
<div style="left:1034.5px;top:197px;width:8.5px;height:156px;background:#adadad;border-radius:4.2px;"></div>
<svg style="left:1035.5px;top:547.5px;" width="8" height="5" viewBox="0 0 8 5"><path d="M0.4 0.5 L3.7 4 L7 0.5" fill="none" stroke="#555" stroke-width="1"/></svg>
<span class="t" style="top:569.00px;font-size:14px;line-height:20px;color:#3c3c3c;-webkit-text-stroke:0.45px #3c3c3c;left:734.60px;transform-origin:0 0;transform:scaleX(0.9887);">Finish Packaging</span>
<div style="left:740px;top:602px;width:81px;height:24px;background:#fff;border:1px solid #4c4c4c;border-radius:3.5px;"></div>
<div style="left:831px;top:602px;width:81px;height:24px;background:#fff;border:1px solid #4c4c4c;border-radius:3.5px;"></div>
<div style="left:922px;top:602px;width:81px;height:24px;background:#fff;border:1px solid #4c4c4c;border-radius:3.5px;"></div>
<svg style="left:751px;top:608px;" width="16" height="12" viewBox="0 0 16 12"><path d="M1.2 6.6 L5.4 10.6 L14.6 1.4" fill="none" stroke="#4cae4c" stroke-width="2.4"/></svg>
<span class="t" style="top:605.00px;font-size:12.5px;line-height:18px;color:#262626;left:768.90px;transform-origin:0 0;transform:scaleX(0.9400);">Analyze</span>
<span class="t" style="top:605.00px;font-size:12.5px;line-height:18px;color:#262626;left:848.80px;transform-origin:0 0;transform:scaleX(0.9292);">Package</span>
<svg style="left:943.5px;top:608px;" width="14" height="12" viewBox="0 0 14 12"><rect x="0.5" y="0.5" width="13" height="11" fill="#fff" stroke="#555" stroke-width="1"/><path d="M5 3 H11.6 M5 6 H11.6 M5 9 H11.6" stroke="#2f86c9" stroke-width="1.1"/><path d="M2.2 3 H3.6 M2.2 6 H3.6 M2.2 9 H3.6" stroke="#555" stroke-width="1.1"/></svg>
<span class="t" style="top:605.00px;font-size:12.5px;line-height:18px;color:#262626;left:959.40px;transform-origin:0 0;transform:scaleX(0.9317);">Jobs</span>
<div style="left:1074px;top:70px;width:6px;height:60.5px;background:#bdbdc1;"></div>
<div style="left:1074px;top:143px;width:6px;height:53px;background:#bdbdc1;"></div>
<div style="left:1074px;top:208.3px;width:6px;height:62px;background:#bdbdc1;"></div>
<div style="left:1074px;top:283.5px;width:6px;height:75px;background:#bdbdc1;"></div>
<svg style="left:1056px;top:70px;" width="17" height="16" viewBox="0 0 17 16"><path d="M5.6 3 V9 M5.6 5.4 H11 V9" fill="none" stroke="#666" stroke-width="1.1"/><path d="M2 3 H9" stroke="#666" stroke-width="1.1"/>
<path d="M0.6 8.4 H3 L3.6 9.2 H6.4 V15.4 H0.6 Z" fill="#e5c63a"/><path d="M8 8.4 H10.4 L11 9.2 H13.8 V15.4 H8 Z" fill="#e5c63a"/>
<rect x="11.4" y="0.5" width="5" height="5.4" rx="0.8" fill="#e9f3fb" stroke="#2f86c9" stroke-width="1"/></svg>
<span class="t" style="left:1071.10px;top:90.40px;font-size:13px;line-height:16px;color:#3a3a3a;transform-origin:0 0;transform:rotate(90deg) scaleX(0.8794);">Catalog</span>
<svg style="left:1057.5px;top:143px;" width="15" height="17" viewBox="0 0 15 17"><path d="M7.2 0.6 V13.4 M1.2 8 L7.2 14.4 L13.2 8" fill="none" stroke="#4cae4c" stroke-width="2.8"/></svg>
<span class="t" style="left:1071.10px;top:163.40px;font-size:13px;line-height:16px;color:#3a3a3a;transform-origin:0 0;transform:rotate(90deg) scaleX(0.8517);">Export</span>
<svg style="left:1055.5px;top:209px;" width="17" height="15" viewBox="0 0 17 15"><path d="M0.6 0.6 H15.6 V9 M0.6 0.6 V9.4 H5" fill="none" stroke="#666" stroke-width="1.1"/><path d="M3 3 H13.4" stroke="#2f86c9" stroke-width="1.2" stroke-dasharray="1 1"/>
<rect x="6" y="5.4" width="9" height="8.6" fill="#fff" stroke="#666" stroke-width="1.1"/><path d="M8.4 7.6 V12 M10.6 7.6 V12 M12.8 7.6 V12" stroke="#666" stroke-width="0.9"/></svg>
<span class="t" style="left:1071.10px;top:228.40px;font-size:13px;line-height:16px;color:#3a3a3a;transform-origin:0 0;transform:rotate(90deg) scaleX(0.8891);">Element</span>
<svg style="left:1055.5px;top:283px;" width="17" height="17" viewBox="0 0 17 17"><path d="M4.6 1 L15.6 3.4 L13.6 15.6 L1.6 13 Z" fill="#f0d24e"/><path d="M2.6 2.6 L9.4 9.8" stroke="#7a5a2c" stroke-width="2.2"/><path d="M1.4 1.2 L3.8 2 L2.2 3.6 Z" fill="#333"/></svg>
<span class="t" style="left:1071.10px;top:303.40px;font-size:13px;line-height:16px;color:#3a3a3a;transform-origin:0 0;transform:rotate(90deg) scaleX(0.9253);">Symbology</span>
<div style="left:1080px;top:0px;width:2px;height:653px;background:#f2f2f2;"></div>
<div style="left:1080px;top:0px;width:2px;height:4px;background:#111;"></div>
<div style="left:1080px;top:14px;width:2px;height:12px;background:#7f93b5;"></div>
<div style="left:1080px;top:26px;width:2px;height:14px;background:#111;"></div>
<div style="left:1080px;top:40px;width:2px;height:25px;background:#555;"></div>
<div style="left:860px;top:358px;width:219.5px;height:147.5px;background:#f2f2f2;border:1px solid #c6c6c6;"></div>
<span class="t" style="top:362.50px;font-size:12px;line-height:17px;color:#4a4a4a;font-weight:bold;left:868.20px;transform-origin:0 0;transform:scaleX(0.9594);">Include Toolboxes</span>
<span class="t" style="top:380.50px;font-size:12px;line-height:17px;color:#4c4c4c;left:868.20px;transform-origin:0 0;transform:scaleX(0.9864);">Project toolboxes and the data</span>
<span class="t" style="top:395.50px;font-size:12px;line-height:17px;color:#4c4c4c;left:868.20px;transform-origin:0 0;">referenced by their tools will be</span>
<span class="t" style="top:410.50px;font-size:12px;line-height:17px;color:#4c4c4c;left:868.20px;transform-origin:0 0;transform:scaleX(1.0063);">included. If this option is not checked,</span>
<span class="t" style="top:425.50px;font-size:12px;line-height:17px;color:#4c4c4c;left:868.20px;transform-origin:0 0;">project toolboxes, except the default</span>
<span class="t" style="top:440.50px;font-size:12px;line-height:17px;color:#4c4c4c;left:868.20px;transform-origin:0 0;transform:scaleX(0.9929);">toolbox, will be excluded. Toolboxes</span>
<span class="t" style="top:455.50px;font-size:12px;line-height:17px;color:#4c4c4c;left:868.20px;transform-origin:0 0;transform:scaleX(0.9936);">inside connected folders are not</span>
<span class="t" style="top:470.50px;font-size:12px;line-height:17px;color:#4c4c4c;left:868.20px;transform-origin:0 0;transform:scaleX(0.9894);">considered project toolboxes and are</span>
<span class="t" style="top:485.50px;font-size:12px;line-height:17px;color:#4c4c4c;left:868.20px;transform-origin:0 0;transform:scaleX(1.0132);">not impacted by this setting.</span>
<div style="left:0px;top:653px;width:1080px;height:48px;background:#1c1c1c;"></div>
<div style="left:1080px;top:653px;width:2px;height:25px;background:#f4f4f4;"></div>
<div style="left:1080px;top:678px;width:2px;height:23px;background:#333;"></div>
<svg style="left:21px;top:665.5px;" width="23" height="23" viewBox="0 0 23 23"><defs><linearGradient id="wg" x1="0" y1="0" x2="1" y2="1"><stop offset="0" stop-color="#5fd0ff"/><stop offset="1" stop-color="#1694e8"/></linearGradient></defs>
<rect x="0" y="0" width="11" height="11" rx="0.8" fill="url(#wg)"/><rect x="12" y="0" width="11" height="11" rx="0.8" fill="url(#wg)"/><rect x="0" y="12" width="11" height="11" rx="0.8" fill="url(#wg)"/><rect x="12" y="12" width="11" height="11" rx="0.8" fill="url(#wg)"/></svg>
<svg style="left:65px;top:665px;" width="24" height="24" viewBox="0 0 24 24"><circle cx="10.4" cy="10" r="8" fill="#2a2a2a" stroke="#f2f2f2" stroke-width="2.2"/><path d="M16.2 16 L22 22.6" stroke="#e8e8e8" stroke-width="2.6" stroke-linecap="round"/></svg>
<svg style="left:108.5px;top:666px;" width="25" height="22" viewBox="0 0 25 22"><path d="M1 2 Q1 0.6 2.4 0.6 H8 L10.6 3 H23 Q24.4 3 24.4 4.4 V8 H1 Z" fill="#e8a825"/>
<path d="M1 6.4 Q1 5.2 2.2 5.2 H23.2 Q24.4 5.2 24.4 6.4 V20 Q24.4 21.4 23 21.4 H2.4 Q1 21.4 1 20 Z" fill="#fbd04f"/>
<path d="M6.6 21.4 V16.6 Q6.6 15.4 7.8 15.4 H17.6 Q18.8 15.4 18.8 16.6 V21.4 Z" fill="#2f8fe2"/><rect x="9.4" y="17.6" width="6.6" height="1.6" rx="0.8" fill="#1466b8"/></svg>
<svg style="left:153px;top:664.5px;" width="25" height="25" viewBox="0 0 25 25"><defs><linearGradient id="eg1" x1="0" y1="0" x2="1" y2="1"><stop offset="0" stop-color="#3fd3a0"/><stop offset="1" stop-color="#1f9fd8"/></linearGradient></defs>
<path d="M12.5 0.8 C19 0.8 24.2 5.8 24.2 12 C24.2 15.6 21.6 17.8 18.8 17.8 C16.4 17.8 15.2 16.6 15.6 15.2 C16.6 13 15.4 9.6 11.6 9.4 C8 9.4 4.6 12.6 4.6 17 C2.2 14.6 0.8 12.4 0.8 11.6 C1.4 5.4 6.4 0.8 12.5 0.8 Z" fill="url(#eg1)"/>
<path d="M4.6 17 C4.6 12.6 8 9.4 11.6 9.4 C9.8 10.4 9 12.4 9.2 14.6 C9.6 19 13.4 22.4 18.6 21.8 C16.8 23.4 14.6 24.2 12.5 24.2 C8.4 24.2 5.4 21 4.6 17 Z" fill="#1565c0"/>
<path d="M18.6 21.8 C21 21 23 19 23.8 16 C22.6 17.4 20.6 17.8 18.8 17.8 C16.6 17.8 15.2 16.6 15.6 15.2 C14.8 17 15.4 20.6 18.6 21.8 Z" fill="#1a87d4"/>
<rect x="1" y="14.6" width="11.6" height="9.4" rx="1.2" fill="#c8701a"/><rect x="1" y="14.6" width="11.6" height="4.2" rx="1" fill="#e58d2a"/><path d="M4.6 14.6 V13 H9 V14.6" fill="none" stroke="#e58d2a" stroke-width="1.2"/><rect x="6" y="17.8" width="1.8" height="2.2" fill="#fbd04f"/></svg>
<svg style="left:197px;top:663.5px;" width="24" height="26" viewBox="0 0 24 26"><defs><radialGradient id="fg" cx="0.6" cy="0.2" r="0.9"><stop offset="0" stop-color="#ffe14a"/><stop offset="0.45" stop-color="#ff8a16"/><stop offset="1" stop-color="#f2265c"/></radialGradient></defs>
<path d="M12 3.4 C13 1.8 14.6 0.8 15.4 0.4 C15 3 17 4.4 19.4 7 C22.4 10 23.4 13 23 16 C22.2 21.6 17.6 25.4 12 25.4 C5.8 25.4 0.8 20.6 0.8 14.4 C0.8 11 2.2 8 3.4 6.8 C3.4 8 3.8 8.8 4.2 9.2 C5 6.6 7 4.6 8.4 4.2 C8.2 5.2 8.6 6.2 9.6 6.8 C10.2 5.4 11 4.2 12 3.4 Z" fill="url(#fg)"/>
<circle cx="12" cy="15.2" r="6" fill="#8a3fd6"/><path d="M6.2 13.4 C7.6 10 12.6 9.4 15.4 11.6 C12.8 11.2 11.6 12.6 12.6 14.4 C13.4 15.8 16.2 16 17.8 14.8 C18 18.6 15.2 21.2 12 21.2 C8 21.2 5.4 17.4 6.2 13.4 Z" fill="#5b4be0"/></svg>
<div style="left:206px;top:693.5px;width:6.5px;height:2.2px;background:#8a8a8a;border-radius:1.1px;"></div>
<div style="left:233px;top:657.5px;width:40px;height:39px;background:#2e2e2e;border:1px solid #383838;border-radius:4px;"></div>
<svg style="left:242px;top:663.5px;" width="22" height="27" viewBox="0 0 22 27"><path d="M11 0.8 L21.4 6.6 V20.4 L11 26.2 L0.6 20.4 V6.6 Z" fill="#0b6fe0"/>
<path d="M11 0.8 L21.4 6.6 L11 12 L0.6 6.6 Z" fill="#1c80ee"/>
<circle cx="11" cy="13.4" r="7" fill="#fff"/>
<path d="M8.4 7.6 C10.6 8.8 11 10.4 9.8 12 C8.2 13.6 9 15.6 11.2 15.8 C12 17.6 11.2 19 9.8 20 C6 19.2 4.2 16.2 4.6 12.6 C4.8 10.4 6.2 8.4 8.4 7.6 Z M13.4 7 C16.2 8.2 17.8 10.8 17.4 14 C16.2 13.4 15.2 12 15.4 10.6 C14.2 9.6 13.4 8.6 13.4 7 Z" fill="#0b6fe0"/></svg>
<div style="left:245px;top:693px;width:16px;height:3px;background:#4cc2ff;border-radius:1.5px;"></div>
<svg style="left:288.5px;top:663.5px;" width="18" height="26" viewBox="0 0 18 26"><rect x="0.6" y="2.6" width="16.8" height="21" rx="1.2" fill="#3fb3dc"/><rect x="0.6" y="20.6" width="16.8" height="2" fill="#e8e8e8"/><rect x="0.6" y="22.2" width="16.8" height="2.2" rx="0.8" fill="#c87a3a"/>
<path d="M3.6 7.4 H14.4 M3.6 10.6 H14.4 M3.6 13.8 H14.4 M3.6 17 H14.4" stroke="#1679a6" stroke-width="1.5"/>
<g stroke="#9fdcf2" stroke-width="1.1"><path d="M2.6 0.6 V4 M5.2 0.6 V4 M7.8 0.6 V4 M10.4 0.6 V4 M13 0.6 V4 M15.4 0.6 V4"/></g></svg>
<div style="left:294px;top:693.5px;width:6.5px;height:2.2px;background:#8a8a8a;border-radius:1.1px;"></div>
<svg style="left:887px;top:673px;" width="13" height="8" viewBox="0 0 13 8"><path d="M0.8 7.2 L6.4 1.2 L12 7.2" fill="none" stroke="#f2f2f2" stroke-width="1.5"/></svg>
<svg style="left:916px;top:667.5px;" width="19" height="19" viewBox="0 0 19 19"><path d="M2.2 10 C1.6 5.6 5 1.6 9.4 1.6 C12 1.6 14 2.8 15.2 4.6 M15.6 1 V5 H11.6" fill="none" stroke="#f2f2f2" stroke-width="1.3"/>
<path d="M5 14.6 H1.4 V18" fill="none" stroke="#f2f2f2" stroke-width="1.3"/><path d="M1.6 14.8 C2.4 16 3.6 16.8 5 17.2" fill="none" stroke="#f2f2f2" stroke-width="1.3"/>
<circle cx="13" cy="13.6" r="4.2" fill="#f7941d"/></svg>
<svg style="left:949px;top:667.5px;" width="17" height="18" viewBox="0 0 17 18"><rect x="0.7" y="2.4" width="11.6" height="9.4" rx="0.8" fill="none" stroke="#f2f2f2" stroke-width="1.2"/><path d="M3.4 15.4 H10 M6.6 11.8 V15.4" stroke="#f2f2f2" stroke-width="1.2"/>
<rect x="10.8" y="0.6" width="5" height="6.4" rx="0.8" fill="#1c1c1c" stroke="#f2f2f2" stroke-width="1.1"/><path d="M13.3 7 V16.6 H11" fill="none" stroke="#f2f2f2" stroke-width="1.1"/><path d="M12.4 2.4 V4.4 M14.2 2.4 V4.4" stroke="#f2f2f2" stroke-width="0.8"/></svg>
<svg style="left:972px;top:669.5px;" width="18" height="15" viewBox="0 0 18 15"><path d="M0.8 5 H3.6 L7.4 1.4 V13.6 L3.6 10 H0.8 Z" fill="none" stroke="#f2f2f2" stroke-width="1.1"/>
<path d="M9.6 5 C10.6 6.4 10.6 8.6 9.6 10 M11.8 3.2 C13.6 5.6 13.6 9.4 11.8 11.8 M14 1.4 C16.6 5 16.6 10 14 13.6" fill="none" stroke="#f2f2f2" stroke-width="1.1"/></svg>
<span class="t" style="top:661.00px;font-size:11.5px;line-height:16px;color:#fff;right:20.70px;transform-origin:100% 0;transform:scaleX(1.0368);-webkit-text-stroke:0.2px #fff;">8:50 PM</span>
<span class="t" style="top:677.00px;font-size:11.5px;line-height:16px;color:#fff;right:20.70px;transform-origin:100% 0;transform:scaleX(1.0947);-webkit-text-stroke:0.2px #fff;">1/15/2026</span>
</div></body></html>
